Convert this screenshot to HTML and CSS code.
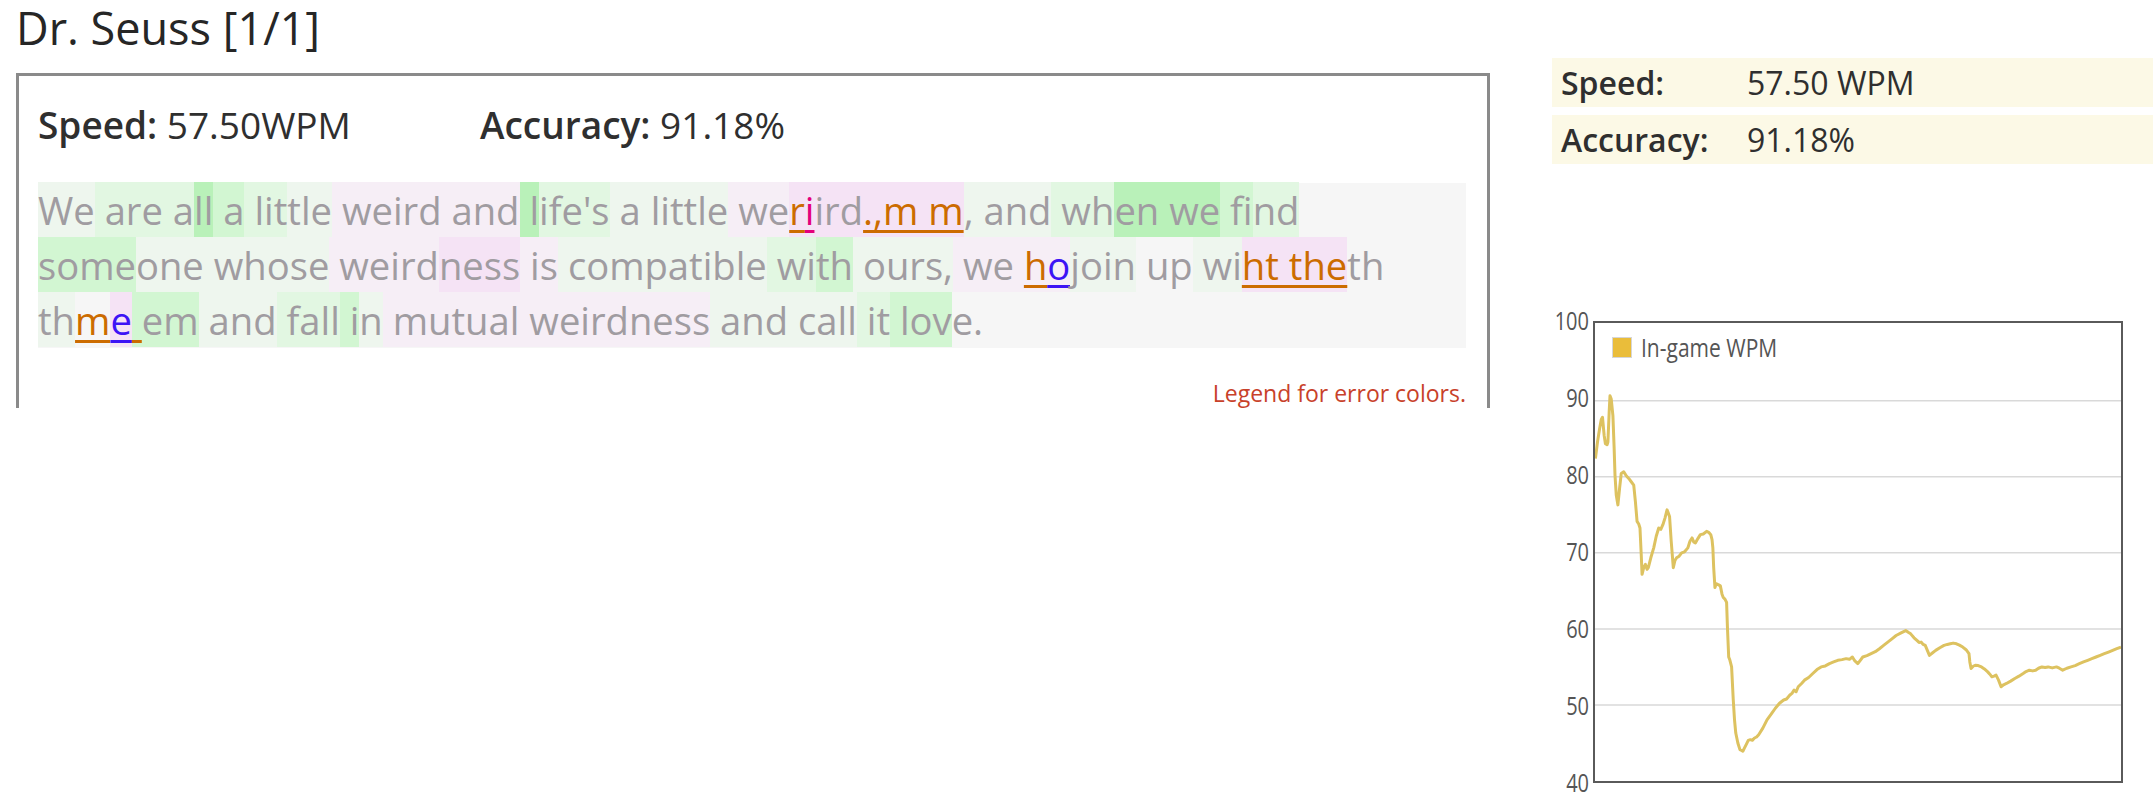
FILE: index.html
```html
<!DOCTYPE html>
<html>
<head>
<meta charset="utf-8">
<title>Dr. Seuss [1/1]</title>
<link rel="stylesheet" href="styles.css">
</head>
<body>
<div class="page">
  <div class="left">
    <h1 class="title">Dr. Seuss [1/1]</h1>
    <div class="box">
      <div class="stats">
        <div class="stat"><b>Speed:</b> 57.50WPM</div>
        <div class="stat"><b>Accuracy:</b> 91.18%</div>
      </div>
      <div class="typed"><span class="g1">We</span><span class="g2"> are a</span><span class="g4">ll</span><span class="g3"> a</span><span class="g2"> lit</span><span class="g1">tle</span><span class="p1"> weird and</span><span class="g4"> l</span><span class="g2">ife's</span><span class="g1"> a little</span><span class="p1"> we</span><span class="p2"><span class="eo">r</span><span class="em">i</span>ird<span class="eo">.,m m</span></span><span class="g1">, and</span><span class="g2"> wh</span><span class="g4">en we</span><span class="g3"> fi</span><span class="g2">nd</span><br><span class="g3">some</span><span class="g1">one whose</span><span class="p1"> weird</span><span class="p2">ness</span><span class="p1"> is</span><span class="g1"> compatible</span><span class="g2"> wi</span><span class="g3">th</span><span class="g1"> ours,</span><span class="p1"> we <span class="eo">h</span><span class="eb">o</span></span><span class="g1">join</span> up<span class="g1"> wi</span><span class="p2"><span class="eo">ht the</span></span>th<br><span class="g1">th</span><span class="eo">m</span><span class="p2"><span class="eb">e</span></span><span class="g3"><span class="eo"> </span>em</span><span class="g1"> and</span><span class="g2"> fall</span><span class="g3"> i</span><span class="g1">n</span><span class="p1"> mutual weirdness</span><span class="g1"> and call</span><span class="g2"> it</span><span class="g3"> lov</span>e.</div>
      <div class="legend">Legend for error colors.</div>
    </div>
  </div>
  <div class="right">
    <div class="summary">
      <div class="row"><span class="label">Speed:</span><span>57.50 WPM</span></div>
      <div class="row"><span class="label">Accuracy:</span><span>91.18%</span></div>
    </div>
    <div class="chart">
      <div class="yaxis">
        <span>100</span><span>90</span><span>80</span><span>70</span><span>60</span><span>50</span><span>40</span>
      </div>
      <div class="plot">
        <svg class="plot-svg" viewBox="237 60 1263 1385" preserveAspectRatio="none">
          <g class="grid">
            <line x1="237" y1="295" x2="1500" y2="295"/>
            <line x1="237" y1="525" x2="1500" y2="525"/>
            <line x1="237" y1="755" x2="1500" y2="755"/>
            <line x1="237" y1="985" x2="1500" y2="985"/>
            <line x1="237" y1="1215" x2="1500" y2="1215"/>
          </g>
          <polyline class="wpm" points="238,470 243,420 248,380 252,352 255,345 259,400 262,425 266,428 268,420 271,330 273,280 276,290 280,340 283,440 285,520 288,580 292,610 296,560 300,515 306,510 312,522 318,530 324,540 330,550 334,600 338,660 342,668 345,680 348,760 350,820 354,800 358,790 362,805 365,800 371,770 378,740 384,705 390,680 395,684 400,670 405,650 410,625 413,635 416,645 420,720 425,800 429,778 433,770 439,765 445,755 452,752 460,740 465,720 470,710 474,722 478,725 484,712 490,700 497,698 505,690 510,693 515,700 518,715 520,740 522,800 525,860 528,848 530,850 534,852 538,855 542,880 545,890 549,895 553,905 555,980 558,1070 561,1080 565,1100 569,1200 572,1260 575,1300 580,1330 585,1350 588,1352 592,1355 596,1345 600,1335 605,1322 610,1320 615,1322 620,1315 625,1312 630,1305 640,1285 650,1260 660,1243 670,1225 680,1210 690,1200 697,1197 705,1185 710,1180 715,1170 720,1175 725,1160 733,1150 740,1140 750,1132 760,1120 770,1108 780,1100 790,1097 800,1090 810,1085 820,1080 830,1078 840,1075 848,1077 855,1070 861,1082 868,1090 874,1080 880,1070 890,1066 900,1060 910,1054 920,1045 930,1035 940,1025 950,1015 960,1005 972,997 983,990 990,996 995,1000 1003,1012 1010,1020 1015,1026 1020,1025 1025,1032 1030,1035 1035,1050 1040,1065 1047,1058 1055,1050 1065,1042 1075,1035 1083,1032 1090,1030 1097,1028 1105,1030 1112,1034 1120,1040 1128,1048 1135,1060 1137,1085 1140,1105 1145,1098 1150,1095 1157,1096 1165,1100 1172,1106 1180,1115 1185,1122 1190,1130 1195,1128 1200,1125 1206,1140 1212,1160 1218,1154 1225,1150 1235,1143 1245,1135 1255,1128 1265,1120 1272,1114 1280,1110 1288,1112 1295,1110 1302,1104 1310,1100 1318,1102 1325,1100 1335,1103 1345,1100 1352,1104 1360,1110 1370,1104 1380,1100 1390,1096 1400,1090 1410,1085 1420,1080 1430,1075 1440,1070 1450,1065 1460,1060 1470,1055 1480,1050 1490,1045 1500,1040"/>
        </svg>
        <div class="chart-legend"><span class="swatch"></span><span class="legend-text">In-game WPM</span></div>
      </div>
    </div>
  </div>
</div>
</body>
</html>
```

FILE: styles.css
```css
html, body {
  margin: 0;
  padding: 0;
  background: #ffffff;
}

body {
  font-family: "Open Sans", "Noto Sans", sans-serif;
  color: #2b2b2b;
}

.page {
  display: flex;
  align-items: flex-start;
  padding-left: 16px;
  gap: 62px;
}

.left {
  width: 1474px;
  flex: none;
}

.title {
  margin: 0 0 23px 0;
  padding-top: 6px;
  font-size: 45px;
  line-height: 44px;
  font-weight: 400;
  color: #262626;
}

.box {
  box-sizing: border-box;
  height: 335px;
  border: 3px solid #8a8a8a;
  border-bottom: none;
  padding: 30px 21px 0 19px;
}

.stats {
  display: flex;
  font-size: 37px;
  line-height: 37px;
  color: #2f2f2f;
}

.stat {
  width: 442px;
  flex: none;
}

.stat b {
  font-weight: 600;
}

.typed {
  margin-top: 40px;
  background: #f6f6f6;
  font-size: 38.2px;
  line-height: 55px;
  color: #a09ca1;
  white-space: nowrap;
}

.typed > span {
  padding: 2px 0 1px 0;
}

.g1 { background: #eef6ee; }
.g2 { background: #e2f7e2; }
.g3 { background: #d2f6d2; }
.g4 { background: #b9f1b9; }
.p1 { background: #f6eef6; }
.p2 { background: #f5e3f5; }

.eo, .em, .eb {
  text-decoration-line: underline;
  text-decoration-thickness: 3px;
  text-underline-offset: 5px;
}

.eo { color: #cc6c00; text-decoration-color: #cc6c00; }
.em { color: #e3007c; text-decoration-color: #e3007c; }
.eb { color: #3d14f5; text-decoration-color: #3d14f5; }

.legend {
  margin-top: 34px;
  text-align: right;
  font-size: 23px;
  line-height: 23px;
  color: #c8412a;
}

.right {
  width: 601px;
  flex: none;
  padding-top: 58px;
}

.summary {
  display: flex;
  flex-direction: column;
  gap: 8px;
  font-size: 32px;
  color: #2f2f2f;
}

.row {
  display: grid;
  grid-template-columns: 186px 1fr;
  height: 49px;
  line-height: 49px;
  padding-left: 9px;
  background: #fcf9e6;
}

.label {
  font-weight: 600;
}

.chart {
  margin-top: 145px;
  display: grid;
  grid-template-columns: 37px 530px;
  column-gap: 4px;
  align-items: start;
}

.yaxis {
  height: 486px;
  display: flex;
  flex-direction: column;
  justify-content: space-between;
  align-items: flex-end;
  font-size: 20px;
  line-height: 24px;
  color: #555555;
}

.yaxis span {
  transform: scaleY(1.25);
  transform-origin: center;
}

.plot {
  position: relative;
  margin-top: 12px;
  height: 462px;
  box-sizing: border-box;
  border: 2px solid #5a5a5a;
}

.plot-svg {
  display: block;
  width: 100%;
  height: 100%;
}

.grid line {
  stroke: #d9d9d9;
  stroke-width: 1.5;
  vector-effect: non-scaling-stroke;
}

.wpm {
  fill: none;
  stroke: #ddc260;
  stroke-width: 3;
  stroke-linejoin: round;
  vector-effect: non-scaling-stroke;
}

.chart-legend {
  position: absolute;
  left: 17px;
  top: 13px;
  display: flex;
  align-items: center;
  gap: 9px;
  font-size: 21px;
  line-height: 22px;
  color: #555555;
}

.legend-text {
  transform: scaleY(1.2);
}

.swatch {
  width: 18px;
  height: 19px;
  background: #eabd3a;
  border: 1px solid #d6d6d6;
}
```
